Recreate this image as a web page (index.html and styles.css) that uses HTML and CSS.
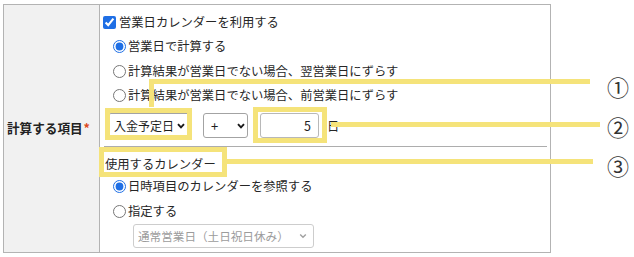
FILE: index.html
```html
<!DOCTYPE html>
<html lang="ja">
<head>
<meta charset="utf-8">
<title>計算する項目</title>
<link rel="stylesheet" href="styles.css">
</head>
<body>
<div class="page">
  <div class="form">
    <div class="label">計算する項目<span class="req">*</span></div>
    <div class="field">
      <label class="row check"><input type="checkbox" checked><span>営業日カレンダーを利用する</span></label>
      <label class="row radio"><input type="radio" name="mode" checked><span>営業日で計算する</span></label>
      <label class="row radio r3"><input type="radio" name="mode"><span>計算結果が営業日でない場合、翌営業日にずらす</span></label>
      <label class="row radio"><input type="radio" name="mode"><span>計算結果が営業日でない場合、前営業日にずらす</span></label>
      <div class="calc">
        <span class="sel sel-a">
          <select><option>入金予定日</option></select>
          <svg class="chev" width="8" height="6" viewBox="0 0 8 6"><path d="M1 1.2 L4 4.4 L7 1.2" fill="none" stroke="#1a1a1a" stroke-width="1.9"/></svg>
        </span>
        <span class="sel sel-b">
          <select><option>+</option></select>
          <svg class="chev" width="8" height="6" viewBox="0 0 8 6"><path d="M1 1.2 L4 4.4 L7 1.2" fill="none" stroke="#1a1a1a" stroke-width="1.9"/></svg>
        </span>
        <input class="num-input" type="text" value="5">
        <span class="unit">日</span>
      </div>
      <div class="sep"></div>
      <div class="sub">使用するカレンダー</div>
      <label class="row radio"><input type="radio" name="cal" checked><span>日時項目のカレンダーを参照する</span></label>
      <label class="row radio r-spec"><input type="radio" name="cal"><span>指定する</span></label>
      <div class="dis-row">
        <span class="sel sel-dis">
          <select disabled><option>通常営業日（土日祝日休み）</option></select>
          <svg class="chev" width="8" height="6" viewBox="0 0 8 6"><path d="M1.2 1.5 L4 4.2 L6.8 1.5" fill="none" stroke="#a0a0a0" stroke-width="1.4"/></svg>
        </span>
      </div>
    </div>
  </div>

  <div class="ann box box-a"></div>
  <div class="ann box box-b"></div>
  <div class="ann box box-c"></div>
  <div class="ann bar line1-h"></div>
  <div class="ann bar line1-v"></div>
  <div class="ann bar line2"></div>
  <div class="ann bar line3"></div>
  <div class="ann num n1">①</div>
  <div class="ann num n2">②</div>
  <div class="ann num n3">③</div>
</div>
</body>
</html>
```
FILE: styles.css
```css
* { box-sizing: border-box; }

body {
  margin: 0;
  background: #fff;
  color: #262626;
  font-family: "Noto Sans CJK JP", "Noto Sans", sans-serif;
}

.page {
  position: relative;
  width: 634px;
  height: 257px;
  padding: 4px 0 0 3px;
}

.form {
  display: grid;
  grid-template-columns: 96px 1fr;
  width: 548px;
  border: 1px solid #b3b3b3;
}

.label {
  display: flex;
  align-items: center;
  padding: 0 0 3px 3px;
  background: #f1f1f1;
  border-right: 1px solid #b3b3b3;
  font-size: 12.6px;
  font-weight: bold;
  color: #222;
}

.req {
  color: #dc4a1e;
  margin-left: 1px;
}

.field {
  padding: 5px 0 4px 0;
  font-size: 12.3px;
}

.row {
  display: flex;
  align-items: center;
  height: 24px;
  white-space: nowrap;
}

.row input {
  width: 13px;
  height: 13px;
  accent-color: #1f6fe5;
  flex: none;
}

.check { padding-left: 3px; }
.check input { margin: 0 3px 0 0; }

.radio { padding-left: 13px; }
.radio input { margin: 0 2px 0 0; }

.r3 { margin-top: 1px; }
.r-spec { margin-top: 1px; }

.calc {
  display: flex;
  align-items: center;
  height: 25px;
  margin-top: 6px;
  padding-left: 8px;
}

.sel {
  position: relative;
  display: inline-block;
  vertical-align: top;
  height: 25px;
  flex: none;
}

.sel select {
  appearance: none;
  -webkit-appearance: none;
  display: block;
  height: 25px;
  margin: 0;
  padding: 0 0 0 5px;
  border: 1px solid #a3a3a3;
  border-radius: 3px;
  background: #fff;
  color: #1e1e1e;
  font-family: inherit;
  font-size: 12px;
}

.chev {
  position: absolute;
  top: 10px;
  pointer-events: none;
}

.sel-a select { width: 82px; }
.sel-a .chev { right: 5px; }

.sel-b { margin-left: 13px; }
.sel-b select { width: 45px; padding-left: 7px; font-size: 13px; }
.sel-b .chev { right: 3px; }

.num-input {
  width: 59px;
  height: 25px;
  margin: 0 0 0 12px;
  padding: 0 7px 0 0;
  border: 1px solid #b8b8b8;
  border-radius: 3px;
  text-align: right;
  font-family: inherit;
  font-size: 12.5px;
  color: #1e1e1e;
}

.unit { margin-left: 8px; }

.sep {
  height: 1px;
  margin: 8px 3px 0 4px;
  background: #adadad;
}

.sub {
  height: 20px;
  line-height: 20px;
  margin-top: 7px;
  padding-left: 5px;
}

.dis-row {
  height: 24px;
  margin-top: 1px;
  padding-left: 33px;
}

.sel-dis { height: 24px; }
.sel-dis select {
  width: 181px;
  height: 24px;
  padding-left: 4px;
  border-color: #cdcdcd;
  color: #9c9c9c;
  font-size: 11.6px;
  opacity: 1;
}
.sel-dis .chev { right: 7px; top: 9px; }

/* annotation overlay */
.ann { position: absolute; }

.box { border: 5px solid #f5e37a; }
.bar { background: #f5e37a; }

.box-a { left: 105px; top: 108px; width: 87px; height: 32px; }
.box-b { left: 253px; top: 107px; width: 74px; height: 36px; }
.box-c { left: 99px; top: 147px; width: 128px; height: 30px; }

.line1-h { left: 149px; top: 79px; width: 441px; height: 5px; }
.line1-v { left: 149px; top: 79px; width: 5px; height: 28px; }
.line2 { left: 331px; top: 122px; width: 269px; height: 5px; }
.line3 { left: 227px; top: 159px; width: 366px; height: 5px; }

.num {
  left: 606px;
  width: 24px;
  height: 24px;
  font-size: 22px;
  line-height: 24px;
  text-align: center;
  color: #333;
}
.n1 { top: 74px; }
.n2 { top: 114px; }
.n3 { top: 153px; }
```
